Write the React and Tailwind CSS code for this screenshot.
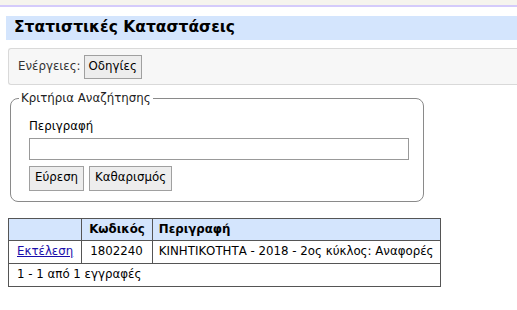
export default function App() {
  const font = { fontFamily: '"DejaVu Sans", Verdana, sans-serif' };
  return (
    <div className="w-[517px] h-[310px] bg-white text-[11.8px] text-black overflow-hidden" style={font}>
      <div className="h-[5px] bg-[#f6f4ee]" />
      <div className="h-[2px] bg-[#d5cbfb]" />
      <div className="pt-[9px] pl-[6px]">
        <div className="h-[24px] bg-[#d4e5fd] pl-[8px] flex items-center">
          <span className="text-[15.5px] font-bold leading-none">Στατιστικές Καταστάσεις</span>
        </div>
      </div>
      <div className="pt-[8px] pl-[8px]">
        <div className="h-[37px] bg-[#f7f7f7] border-t border-b border-l border-[#d9d9d9] rounded-l-[3px] flex items-center pl-[9px] gap-[3px]">
          <span className="text-[#333]">Ενέργειες:</span>
          <button className="h-[24px] px-[4px] bg-[#ededed] border border-[#a0a0a0]">Οδηγίες</button>
        </div>
      </div>
      <fieldset className="ml-[10px] mt-[6px] w-[414px] h-[111px] border border-[#8a8a8a] rounded-[8px] pl-[18px] pr-[14px] pb-[8px]">
        <legend className="px-[2px] -ml-[10px] text-[#222] leading-[15px]">Κριτήρια Αναζήτησης</legend>
        <div className="pt-[15px] leading-none">Περιγραφή</div>
        <input className="mt-[5px] w-[380px] h-[22px] border border-[#999] block" />
        <div className="mt-[6px] flex gap-[5px]">
          <button className="h-[25px] px-[5px] bg-[#ededed] border border-[#a0a0a0]">Εύρεση</button>
          <button className="h-[25px] px-[5px] bg-[#ededed] border border-[#a0a0a0]">Καθαρισμός</button>
        </div>
      </fieldset>
      <table className="ml-[8px] mt-[16px] w-[432px] border-collapse border border-[#555] whitespace-nowrap">
        <thead>
          <tr className="bg-[#d4e5fd] h-[22px]">
            <th className="w-[71px] border border-[#555]"></th>
            <th className="w-[73px] border border-[#555] text-left px-[7px] font-bold">Κωδικός</th>
            <th className="border border-[#555] text-left px-[6px] font-bold">Περιγραφή</th>
          </tr>
        </thead>
        <tbody>
          <tr className="h-[23px]">
            <td className="border border-[#555] px-[8px]"><a href="#" className="text-[#1a0dab] underline">Εκτέλεση</a></td>
            <td className="border border-[#555] px-[8px]">1802240</td>
            <td className="border border-[#555] px-[6px]">ΚΙΝΗΤΙΚΟΤΗΤΑ - 2018 - 2ος κύκλος: Αναφορές</td>
          </tr>
          <tr className="h-[23px]">
            <td colSpan={3} className="border border-[#555] px-[8px]">1 - 1 από 1 εγγραφές</td>
          </tr>
        </tbody>
      </table>
    </div>
  );
}
